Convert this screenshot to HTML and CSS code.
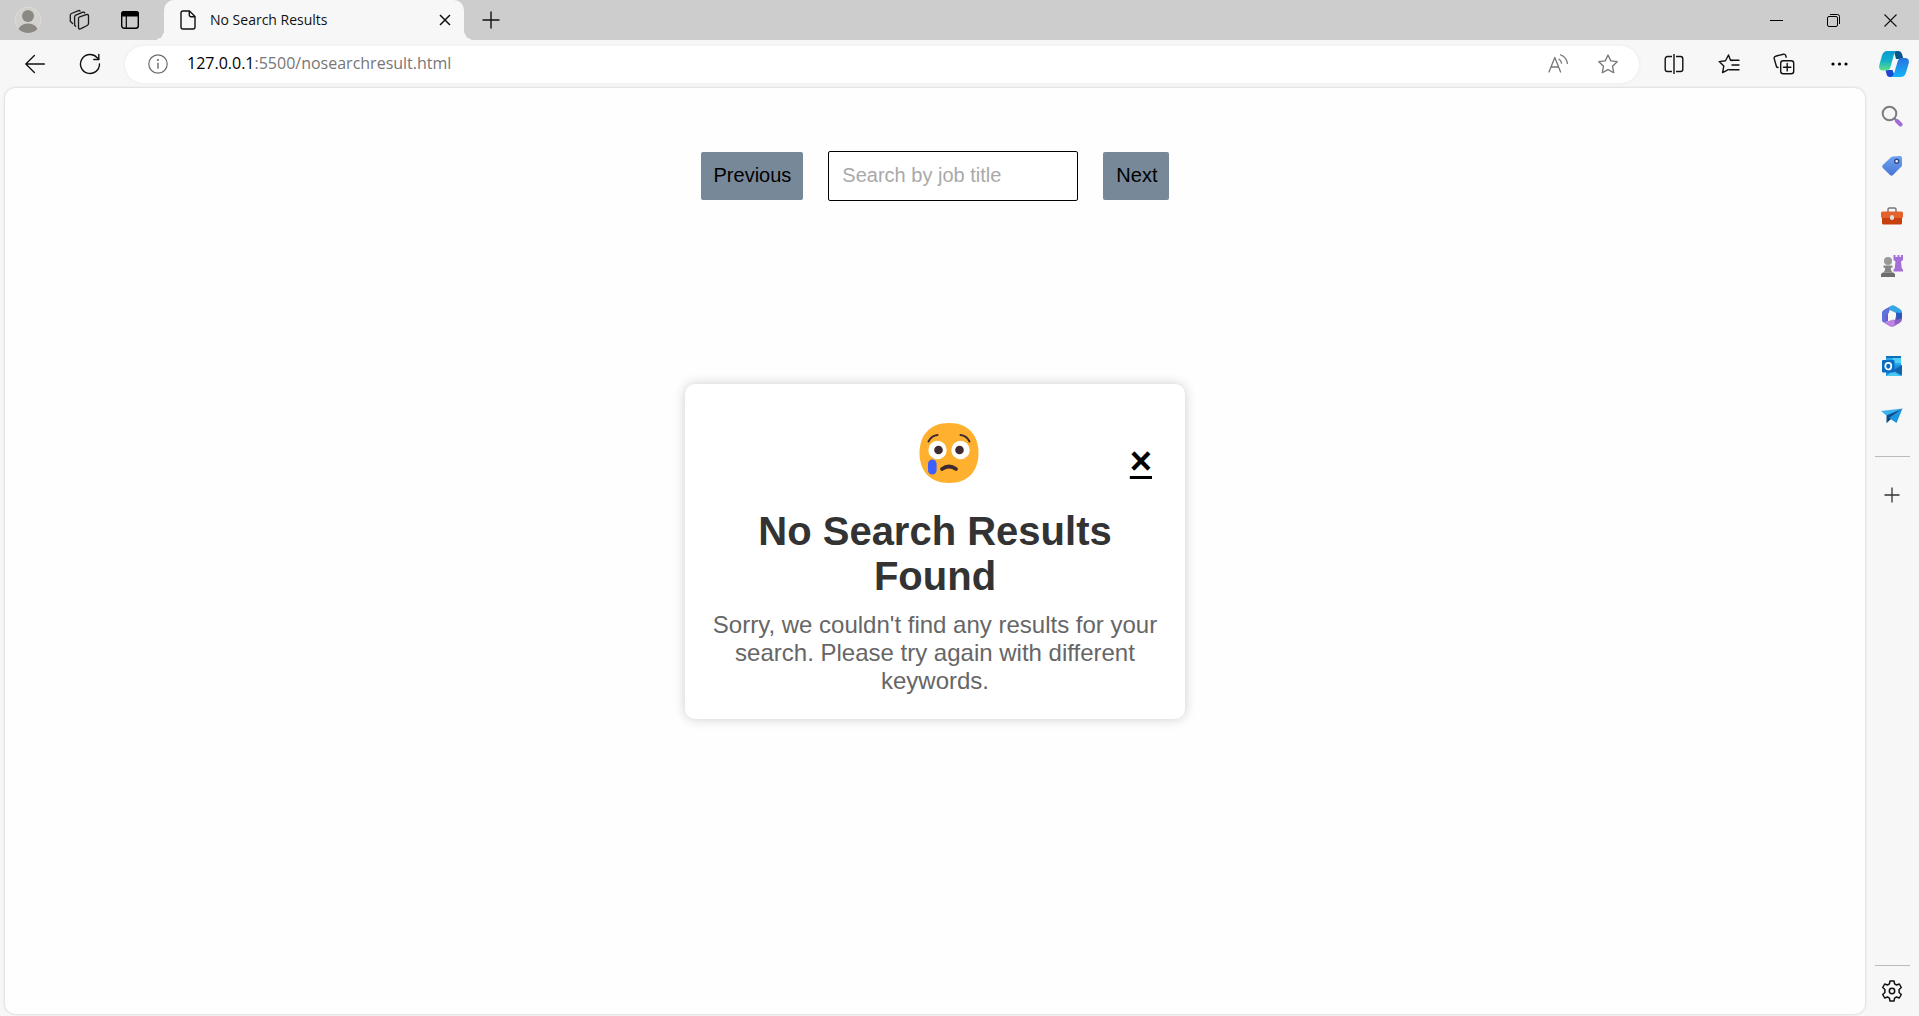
FILE: index.html
```html
<!DOCTYPE html>
<html lang="en">
<head>
<meta charset="utf-8">
<title>No Search Results</title>
<link rel="stylesheet" href="styles.css">
</head>
<body>
<header class="tabstrip">
  <div class="strip-tools">
    <button class="icon-btn" aria-label="Profile"><svg width="28" height="28" viewBox="0 0 28 28"><defs><clipPath id="av"><circle cx="14" cy="14" r="13"/></clipPath></defs><circle cx="14" cy="14" r="13" fill="#d3d1cd" stroke="#dddbd8"/><g clip-path="url(#av)" fill="#8c8884"><circle cx="14" cy="10" r="6"/><ellipse cx="14" cy="25" rx="10" ry="7.500"/></g></svg></button>
    <button class="icon-btn" aria-label="Workspaces"><svg width="22" height="22" viewBox="0 0 22 22" fill="none" stroke="#1a1a1a" stroke-width="1.300" stroke-linejoin="round" stroke-linecap="round"><path d="M10.500 9.500q0-1.200 1.200-1.600l6.600-2.200q2.200-.7 2.200 1.300v7.600q0 1.400-1.300 1.900l-6.300 3.200q-2.400 1-2.400-1.200z"/><path d="M7.600 17.200l-1-.9V7.800q0-1.200 1.200-1.700l7.200-2.900q1.300-.4 1.800.8M4.600 14.500L2.300 12.300V6.200q0-1.200 1.200-1.700l7-2.900q1-.3 1.600.5"/></svg></button>
    <button class="icon-btn" aria-label="Tab actions"><svg width="20" height="20" viewBox="0 0 20 20"><rect x="1.700" y="1.700" width="16.600" height="16.600" rx="2.500" fill="none" stroke="#000" stroke-width="1.400"/><path d="M1 6.500V4a3 3 0 0 1 3-3h12a3 3 0 0 1 3 3v2.500z"/><path d="M6.300 6v12" stroke="#000" stroke-width="1.200"/></svg></button>
  </div>
  <div class="tab">
    <svg width="20" height="20" viewBox="0 0 20 20" fill="none" stroke="#111" stroke-width="1.400" stroke-linejoin="round"><path d="M5 1h6.500L17 6.500V17a2 2 0 0 1-2 2H5a2 2 0 0 1-2-2V3a2 2 0 0 1 2-2z"/><path d="M11.300 1v4a1.700 1.700 0 0 0 1.700 1.700h4"/></svg>
    <span class="tab-title">No Search Results</span>
    <button class="mini-btn" aria-label="Close tab"><svg width="12" height="12" viewBox="0 0 12 12" stroke="#111" stroke-width="1.500"><path d="M1 1l10 10M11 1L1 11"/></svg></button>
  </div>
  <button class="icon-btn new-tab" aria-label="New tab"><svg width="18" height="18" viewBox="0 0 18 18" stroke="#111" stroke-width="1.400"><path d="M9 .5v17M.5 9h17"/></svg></button>
  <div class="window-tools">
    <button class="win-btn" aria-label="Minimize"><svg width="13" height="13" viewBox="0 0 13 13" stroke="#000"><path d="M0 6.500h13"/></svg></button>
    <button class="win-btn" aria-label="Restore"><svg width="13" height="13" viewBox="0 0 13 13" fill="none" stroke="#000"><rect x=".5" y="2.500" width="10" height="10" rx="1.500"/><path d="M3 .5h7.500a2 2 0 0 1 2 2V10"/></svg></button>
    <button class="win-btn" aria-label="Close window"><svg width="13" height="13" viewBox="0 0 13 13" stroke="#111" stroke-width="1.100"><path d="M.5.5l12 12M12.500.5l-12 12"/></svg></button>
  </div>
</header>

<nav class="toolbar" aria-label="Browser toolbar">
  <button class="icon-btn" aria-label="Back"><svg width="20" height="20" viewBox="0 0 20 20" fill="none" stroke="#111" stroke-width="1.300" stroke-linecap="round" stroke-linejoin="round"><path d="M19.400 10H.8M9.400 1.500L.8 10l8.600 8.500"/></svg></button>
  <button class="icon-btn" aria-label="Refresh"><svg width="22" height="22" viewBox="0 0 22 22" fill="none" stroke="#111" stroke-width="1.400" stroke-linecap="round" stroke-linejoin="round"><path d="M20.500 11A9.500 9.500 0 1 1 18 4.600L19.700 6.200"/><path d="M19.800 1.500v5h-5"/></svg></button>
  <div class="address">
    <svg width="20" height="20" viewBox="0 0 20 20"><circle cx="10" cy="10" r="9.200" fill="none" stroke="#6c6c6c" stroke-width="1.200"/><path d="M10 8.700v6" stroke="#6c6c6c" stroke-width="1.400"/><circle cx="10" cy="6" r="1.100" fill="#6c6c6c"/></svg>
    <div class="url" role="textbox" aria-label="Address"><span class="host">127.0.0.1</span>:5500/nosearchresult.html</div>
    <button class="mini-btn" aria-label="Read aloud"><svg width="20" height="20" viewBox="0 0 20 20" fill="none" stroke="#777" stroke-width="1.300" stroke-linecap="round" stroke-linejoin="round"><path d="M1 18L6.800 3.500 12.600 18M3 13h7.600M11 5.200q2.300 1.300 2.500 4M12.600.8q6 2.400 6.800 8.500"/></svg></button>
    <button class="mini-btn" aria-label="Add to favorites"><svg width="20" height="20" viewBox="0 0 20 20" fill="none" stroke="#777" stroke-width="1.300" stroke-linejoin="round"><path d="M10 1l2.800 5.900 6.400.8-4.700 4.500 1.200 6.500L10 15.600l-5.700 3.100 1.200-6.500L.8 7.700l6.400-.8z"/></svg></button>
  </div>
  <button class="icon-btn" aria-label="Split screen"><svg width="20" height="20" viewBox="0 0 20 20" fill="none" stroke="#111" stroke-width="1.400"><path d="M8 2.500H3.500a2.300 2.300 0 0 0-2.300 2.300v10.400a2.300 2.300 0 0 0 2.300 2.300H8M12 2.500h4.500a2.300 2.300 0 0 1 2.300 2.300v10.400a2.300 2.300 0 0 1-2.300 2.300H12M10 0v20"/></svg></button>
  <button class="icon-btn" aria-label="Favorites"><svg width="22" height="20" viewBox="0 0 22 20" fill="none" stroke="#111" stroke-width="1.400" stroke-linejoin="round" stroke-linecap="round"><path d="M14.500 6.500l-2-.3L10.500 1 7.500 6.800l-6.300.8 4.600 4.500-1.200 6.500 5.700-3"/><path d="M13.500 6.300H21M14 11h7M11.500 15.700H21"/></svg></button>
  <button class="icon-btn" aria-label="Collections"><svg width="22" height="22" viewBox="0 0 22 22" fill="none" stroke="#111" stroke-width="1.400" stroke-linejoin="round" stroke-linecap="round"><path d="M5 14.500L3.600 14 1.200 5.600Q.8 3.800 2.500 3.300L10.300 1.200q1.800-.4 2.400 1.300l.5 1.700"/><rect x="7.700" y="7.700" width="13" height="13" rx="2.500"/><path d="M14.200 10.500v7.400M10.500 14.200h7.400"/></svg></button>
  <button class="icon-btn" aria-label="Settings and more"><svg width="18" height="6" viewBox="0 0 18 6"><circle cx="3" cy="3" r="1.600"/><circle cx="9.500" cy="3" r="1.600"/><circle cx="16" cy="3" r="1.600"/></svg></button>
  <button class="icon-btn" aria-label="Copilot"><svg width="30" height="28" viewBox="0 0 30 28"><defs><linearGradient id="c1" x1="0" y1="0" x2="0" y2="1"><stop offset="0" stop-color="#0a9bd6"/><stop offset=".5" stop-color="#12b0c8"/><stop offset="1" stop-color="#5fe08a"/></linearGradient><linearGradient id="c2" x1="0" y1="0" x2="0" y2="1"><stop offset="0" stop-color="#2a72dc"/><stop offset="1" stop-color="#14b4fa"/></linearGradient></defs><path d="M15 1h4q3 0 4 3l1.500 5H17z" fill="#0b5688"/><path d="M16 27h-5q-3 0-3.500-3L6.500 20h7z" fill="#1d49d2"/><path d="M8.500 1H18q-2.500 1-3.500 5L11.500 17q-1 3.500-4 3.500H4q-4.500 0-3.800-5L3 5.500Q4.300 1 8.500 1z" fill="url(#c1)"/><path d="M21.500 27H12q2.500-1 3.500-5L18.500 12q1-4 4-4H26q4.500 0 3.800 5L27 22.500Q25.700 27 21.500 27z" fill="url(#c2)"/></svg></button>
</nav>

<div class="workspace">
  <main class="page">
    <form class="search">
      <button type="button" class="nav-btn">Previous</button>
      <input class="search-box" type="text" placeholder="Search by job title" aria-label="Search by job title">
      <button type="button" class="nav-btn">Next</button>
    </form>
    <section class="card">
      <div class="card-top">
        <svg class="face" width="60" height="60" viewBox="0 0 60 60"><path d="M30 0C50 0 59.500 13 59.500 30S50 60 30 60 .5 47 .5 30 10 0 30 0z" fill="#ffb02e"/><path d="M9.500 18.500q3-6 9-6.500M50.500 18.500q-3-6-9-6.500" fill="none" stroke="#402a32" stroke-width="2" stroke-linecap="round"/><circle cx="18.500" cy="27" r="9.200" fill="#fff"/><circle cx="41.500" cy="27" r="9.200" fill="#fff"/><circle cx="19.500" cy="27" r="4.300" fill="#402a32"/><circle cx="40.500" cy="27" r="4.300" fill="#402a32"/><path d="M23 46q7-5 14 0" fill="none" stroke="#402a32" stroke-width="3.800" stroke-linecap="round"/><rect x="9" y="36.500" width="8.600" height="15" rx="4.300" fill="#3f5fff"/></svg>
        <a class="dismiss" href="#" aria-label="Close">×</a>
      </div>
      <h1>No Search Results Found</h1>
      <p>Sorry, we couldn't find any results for your search. Please try again with different keywords.</p>
    </section>
  </main>

  <aside class="sidebar" aria-label="Sidebar">
    <button class="side-btn" aria-label="Search"><svg width="22" height="22" viewBox="0 0 22 22"><circle cx="8.500" cy="8.500" r="6.800" fill="none" stroke="#7d7d7d" stroke-width="2"/><path d="M13.500 13.500l2 2" stroke="#7d7d7d" stroke-width="2"/><path d="M16 16l3.500 3.500" stroke="#a06ad8" stroke-width="4" stroke-linecap="round"/></svg></button>
    <button class="side-btn" aria-label="Shopping"><svg width="22" height="22" viewBox="0 0 22 22"><defs><linearGradient id="tg" x2="0" y2="1"><stop stop-color="#6ea4f0"/><stop offset="1" stop-color="#4a74d6"/></linearGradient></defs><path d="M12 1.500L19 1q2 0 2 2v7q0 1-.8 1.800L12 20q-1.500 1.500-3 0L1.800 13q-1.500-1.500 0-3L10 2.300q.8-.8 2-.8z" fill="url(#tg)"/><circle cx="15.700" cy="6.300" r="2" fill="#fff" stroke="#2f478f" stroke-width="1.400"/></svg></button>
    <button class="side-btn" aria-label="Tools"><svg width="22" height="22" viewBox="0 0 22 22"><path d="M7 8V4.500Q7 3 8.500 3h5Q15 3 15 4.500V8" fill="none" stroke="#777" stroke-width="1.500"/><path d="M1 12h20v6a1.500 1.500 0 0 1-1.500 1.500h-17A1.500 1.500 0 0 1 1 18z" fill="#c9400f"/><rect y="6.500" width="22" height="6.500" rx="1.500" fill="#e5622c"/><rect x="9" y="10" width="4" height="5" rx="1.800" fill="#ddd"/></svg></button>
    <button class="side-btn" aria-label="Games"><svg width="22" height="24" viewBox="0 0 22 24"><path d="M12.500 1h2v2h2V1h2v2h1.500V1h2v5l-2 1.500.8 7 1.200 1v2h-9.500v-2l1.200-1 .8-7-2-1.500z" fill="#a370da"/><circle cx="7" cy="7" r="4" fill="#999"/><path d="M2.500 11.500h9v2.300H9.800q0 3.700 2.200 4.700H2q2.200-1 2.200-4.700H2.500z" fill="#858585"/><path d="M0 23v-2q0-2.500 2.500-2.500h9q2.500 0 2.500 2.500v2z" fill="#6e6e6e"/></svg></button>
    <button class="side-btn" aria-label="Microsoft 365"><svg width="22" height="22" viewBox="0 0 22 22"><path d="M11 .5L3 5q-2 1.200-2 3.500v6Q1 17 3.500 17.500L7 16V8.500z" fill="#6a56cf"/><path d="M8 2.200L11 .6q1.500-.6 3 .3L19 4q2 1.200 2 3.500V12l-6-1.500V8L8 4.500z" fill="#36a6e6"/><path d="M21 8v6q0 2.500-2 3.700l-5.500 3.200q-2.500 1.300-5 0L3 17.500 14 15l1-4.500z" fill="#8d5fc5"/><path d="M1 8.500q0-2 2-3.500l5-2.800v5.300L5 11v6.800Q1 17 1 14.500z" fill="#5c71dc"/><path d="M15 7.500L21 8v5l-5.500 2z" fill="#2c58ba"/><path d="M3 17.700L13 14l1 5.500-2 1.700q-1.500.6-3 0z" fill="#bd83df"/><path d="M9 7.500h4l2 3.500-2 3.500H9L7 11z" fill="#f7f7f7"/></svg></button>
    <button class="side-btn" aria-label="Outlook"><svg width="22" height="22" viewBox="0 0 22 22"><rect x="5" y="1" width="15" height="15" rx="1" fill="#28a8ea"/><path d="M12 1h8v7h-8z" fill="#50d0f5"/><path d="M5 1h15v2H5z" fill="#1270b8"/><path d="M5 11l16-1v9.500a1.500 1.500 0 0 1-1.500 1.500H5z" fill="#1a8fdb"/><path d="M21 10v10l-9-4.500z" fill="#1364aa"/><path d="M5 21h15L12 16z" fill="#48c8f2"/><rect x="1" y="5" width="12.500" height="12.500" rx="1.200" fill="#0a6cc4"/><ellipse cx="7.300" cy="11.200" rx="3" ry="3.300" fill="none" stroke="#fff" stroke-width="1.700"/></svg></button>
    <button class="side-btn" aria-label="Drop"><svg width="22" height="22" viewBox="0 0 22 22"><path d="M0 6L21.500 3.500 6 11z" fill="#38b2ee"/><path d="M21.500 3.500L5.500 10.500V18l4-4z" fill="#0c4f8d"/><path d="M21.500 3.500L8 13l7.500 5z" fill="#1b95e0"/><path d="M5.500 18l4.500-4-2-1z" fill="#0d3f73"/></svg></button>
    <hr>
    <button class="side-btn" aria-label="Customize"><svg width="16" height="16" viewBox="0 0 16 16" stroke="#333" stroke-width="1.300"><path d="M8 .5v15M.5 8h15"/></svg></button>
    <hr class="push">
    <button class="side-btn" aria-label="Settings"><svg width="22" height="22" viewBox="0 0 22 22" fill="none" stroke="#111" stroke-width="1.500" stroke-linejoin="round"><path d="M9 1h4l.6 2.900 1.900 1.100 2.800-1 2 3.500-2.200 2v3l2.200 2-2 3.500-2.800-1-1.900 1.100L13 21H9l-.6-2.900L6.500 17l-2.800 1-2-3.500 2.200-2v-3l-2.200-2 2-3.500 2.800 1 1.900-1.100z"/><circle cx="11" cy="11" r="2.700"/></svg></button>
  </aside>
</div>
</body>
</html>
```
FILE: styles.css
```css
* { box-sizing: border-box; }

body {
  margin: 0;
  min-height: 100vh;
  display: flex;
  flex-direction: column;
  background: #f7f7f7;
  font-family: "Liberation Sans", Arial, sans-serif;
}

button {
  border: 0;
  padding: 0;
  background: none;
  font: inherit;
}

svg { display: block; flex: none; }

.icon-btn,
.mini-btn,
.win-btn,
.side-btn {
  display: flex;
  align-items: center;
  justify-content: center;
  flex: none;
}

.icon-btn { width: 40px; height: 40px; }
.mini-btn { width: 20px; height: 20px; }
.win-btn { width: 57px; height: 40px; }
.side-btn { width: 54px; height: 50px; }

/* Tab strip */
.tabstrip {
  display: flex;
  height: 40px;
  background: #cdcdcd;
}

.strip-tools {
  display: flex;
  gap: 11px;
  padding: 0 14px 0 8px;
}

.tab {
  position: relative;
  display: flex;
  align-items: center;
  width: 300px;
  padding: 0 9px 0 14px;
  background: #f7f7f7;
  border-radius: 10px 10px 0 0;
}

.tab::before,
.tab::after {
  content: "";
  position: absolute;
  bottom: 0;
  width: 10px;
  height: 10px;
}

.tab::before {
  left: -10px;
  background: radial-gradient(circle at 0 0, #cdcdcd 10px, #f7f7f7 10px);
}

.tab::after {
  right: -10px;
  background: radial-gradient(circle at 100% 0, #cdcdcd 10px, #f7f7f7 10px);
}

.tab-title {
  flex: 1;
  padding: 0 0 2px 12px;
  font: 14px "Open Sans", sans-serif;
  color: #111;
}

.new-tab { margin-left: 7px; }

.window-tools {
  display: flex;
  margin-left: auto;
}

/* Toolbar */
.toolbar {
  display: flex;
  align-items: center;
  gap: 15px;
  height: 48px;
  padding: 0 5px 0 15px;
}

.address {
  flex: 1;
  display: flex;
  align-items: center;
  height: 37px;
  padding: 0 21px 0 23px;
  border-radius: 19px;
  background: #fff;
  box-shadow: 0 0 4px rgba(0, 0, 0, 0.06);
}

.address .mini-btn + .mini-btn { margin-left: 30px; }

.url {
  flex: 1;
  padding: 0 0 2px 19px;
  font: 16px "Open Sans", sans-serif;
  color: #767676;
}

.host { color: #000; }

/* Page and sidebar */
.workspace {
  flex: 1;
  display: flex;
}

.page {
  flex: 1;
  display: flex;
  flex-direction: column;
  align-items: center;
  margin: 0 0 2px 5px;
  padding: 63px 20px 40px;
  border-radius: 10px;
  background: #fefefe;
  box-shadow: 0 0 3px rgba(0, 0, 0, 0.2);
}

.search {
  display: flex;
  align-items: center;
  gap: 25px;
  font-size: 20px;
}

.nav-btn {
  padding: 11px 12px 13px 13px;
  border-radius: 2px;
  background: #778899;
  color: #000;
  line-height: 24px;
}

.search-box {
  width: 250px;
  height: 50px;
  padding: 0 13px 2px;
  border: 1px solid #000;
  border-radius: 2px;
  background: #fff;
  font: inherit;
}

.search-box::placeholder { color: #a9a9a9; opacity: 1; }

.card {
  width: 500px;
  max-width: 100%;
  margin-top: 183px;
  padding: 39px 25px 24px;
  border-radius: 10px;
  background: #fff;
  box-shadow: 0 0 12px rgba(0, 0, 0, 0.2);
  text-align: center;
}

.card-top {
  display: flex;
  justify-content: flex-end;
  gap: 151px;
  padding-right: 8px;
}

.dismiss {
  align-self: flex-end;
  color: #000;
  font-size: 38px;
  font-weight: bold;
  line-height: 44px;
  text-decoration-thickness: 3px;
}

.card h1 {
  margin: 26px 0 12px;
  color: #333;
  font-size: 40px;
  line-height: 45px;
}

.card p {
  margin: 0;
  color: #666;
  font-size: 24px;
  line-height: 28px;
}

.sidebar {
  display: flex;
  flex-direction: column;
  align-items: center;
  width: 54px;
  padding-top: 3px;
}

.sidebar hr {
  width: 35px;
  height: 1px;
  margin: 15px 0 13px;
  border: 0;
  background: #bbb;
}

.sidebar .push { margin: auto 0 0; }
```
